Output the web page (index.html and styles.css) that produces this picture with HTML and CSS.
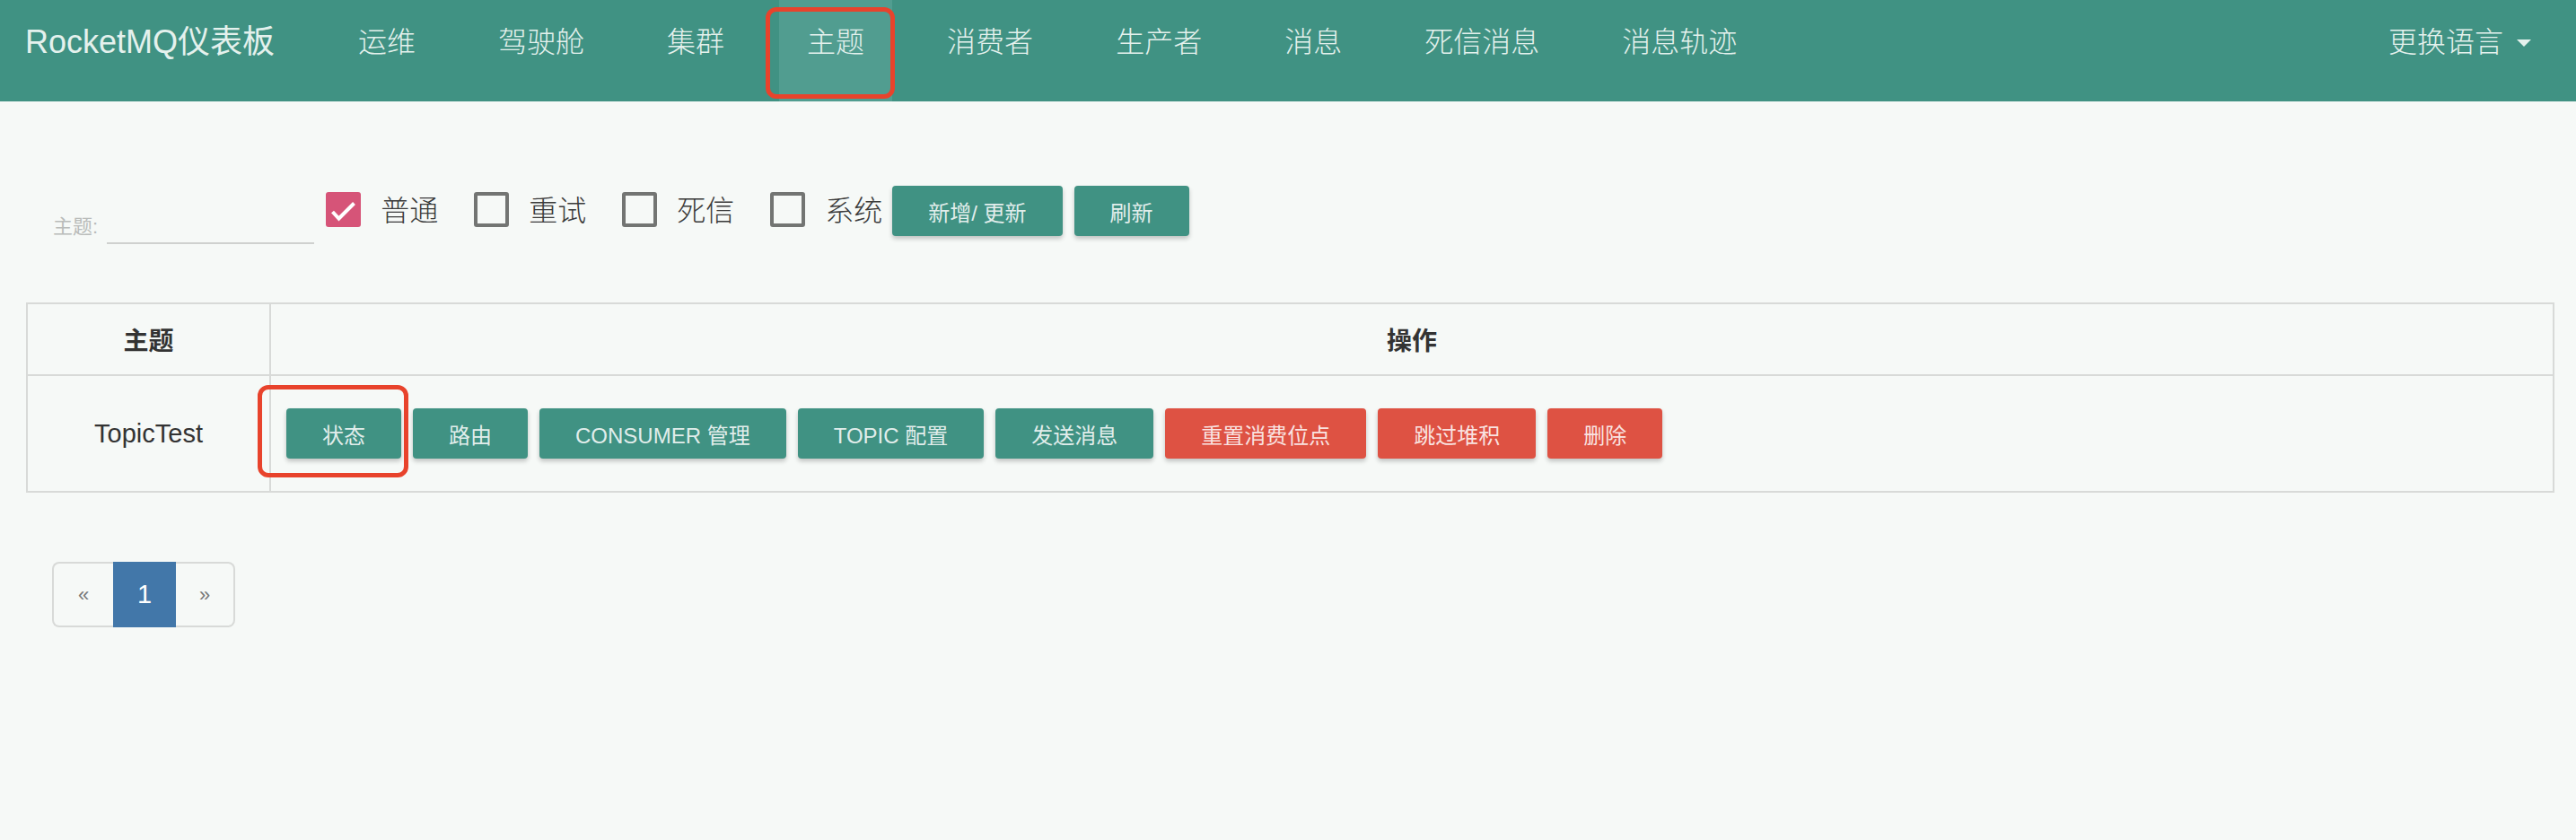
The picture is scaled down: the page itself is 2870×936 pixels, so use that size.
FILE: index.html
```html
<!DOCTYPE html>
<html lang="zh-CN">
<head>
<meta charset="utf-8">
<title>RocketMQ仪表板</title>
<link rel="stylesheet" href="styles.css">
</head>
<body>
<nav class="navbar">
  <div class="brand">RocketMQ仪表板</div>
  <ul class="nav">
    <li><a>运维</a></li>
    <li><a>驾驶舱</a></li>
    <li><a>集群</a></li>
    <li class="active"><a>主题</a><span class="mark nav-mark"></span></li>
    <li><a>消费者</a></li>
    <li><a>生产者</a></li>
    <li><a>消息</a></li>
    <li><a>死信消息</a></li>
    <li><a>消息轨迹</a></li>
  </ul>
  <div class="lang">更换语言<span class="caret"></span></div>
</nav>

<main class="content">
  <div class="filter-row">
    <div class="field">
      <span class="field-label">主题:</span>
      <span class="field-input"></span>
    </div>
    <label class="check">
      <span class="box checked"><svg viewBox="0 0 39 39" width="39" height="39"><polyline points="7.5,22 14.5,29.5 31.5,12.5" fill="none" stroke="#fff" stroke-width="4"/></svg></span>
      <span class="check-text">普通</span>
    </label>
    <label class="check">
      <span class="box"></span>
      <span class="check-text">重试</span>
    </label>
    <label class="check">
      <span class="box"></span>
      <span class="check-text">死信</span>
    </label>
    <label class="check last">
      <span class="box"></span>
      <span class="check-text">系统</span>
    </label>
    <div class="actions">
      <button class="btn btn-teal">新增/ 更新</button>
      <button class="btn btn-teal">刷新</button>
    </div>
  </div>

  <table class="topic-table">
    <thead>
      <tr>
        <th class="col-topic">主题</th>
        <th>操作</th>
      </tr>
    </thead>
    <tbody>
      <tr>
        <td class="topic-name">TopicTest</td>
        <td class="ops-cell">
          <div class="ops">
            <button class="btn btn-teal marked">状态<span class="mark row-mark"></span></button>
            <button class="btn btn-teal">路由</button>
            <button class="btn btn-teal">CONSUMER 管理</button>
            <button class="btn btn-teal">TOPIC 配置</button>
            <button class="btn btn-teal">发送消息</button>
            <button class="btn btn-red">重置消费位点</button>
            <button class="btn btn-red">跳过堆积</button>
            <button class="btn btn-red">删除</button>
          </div>
        </td>
      </tr>
    </tbody>
  </table>

  <ul class="pagination">
    <li class="pg-arrow">«</li>
    <li class="pg-active">1</li>
    <li class="pg-arrow">»</li>
  </ul>
</main>
</body>
</html>
```

FILE: styles.css
```css
* { box-sizing: border-box; }

body {
  margin: 0;
  background: #f6f9f7;
  font-family: "Liberation Sans", "Noto Sans CJK SC", sans-serif;
  color: #333;
}

/* ---------- navbar ---------- */
.navbar {
  display: flex;
  height: 113px;
  background: #409283;
  color: #e4f1ed;
}

.brand {
  font-size: 36px;
  line-height: 40px;
  padding: 27px 0 0 28px;
  white-space: nowrap;
}

.nav {
  display: flex;
  gap: 30px;
  list-style: none;
  margin: 0 0 0 62px;
  padding: 0;
}

.nav li {
  position: relative;
}

.nav a {
  display: block;
  height: 113px;
  padding: 27px 31px 0;
  font-size: 32px;
  line-height: 40px;
  font-weight: 300;
  white-space: nowrap;
}

.nav li.active a {
  background: #519d90;
}

.mark {
  position: absolute;
  border: 5px solid #e8432c;
  border-radius: 12px;
  pointer-events: none;
}

.nav-mark {
  left: -15px;
  top: 8px;
  width: 144px;
  height: 102px;
}

.lang {
  margin-left: auto;
  padding: 27px 50px 0 0;
  font-size: 32px;
  line-height: 40px;
  font-weight: 300;
  white-space: nowrap;
}

.caret {
  display: inline-block;
  margin-left: 15px;
  vertical-align: middle;
  border-top: 8px solid #e4f1ed;
  border-left: 8px solid transparent;
  border-right: 8px solid transparent;
  position: relative;
  top: -2px;
}

/* ---------- content ---------- */
.content {
  padding: 0 24px 0 29px;
}

.filter-row {
  display: flex;
  align-items: flex-start;
  margin-top: 94px;
}

.field {
  display: flex;
  align-items: flex-end;
  height: 65px;
  margin-left: 30px;
}

.field-label {
  font-size: 22px;
  line-height: 26px;
  padding-bottom: 6px;
  color: #b9bcba;
  white-space: nowrap;
}

.field-input {
  display: block;
  width: 231px;
  height: 2px;
  margin-left: 10px;
  background: #cfd1cf;
}

.check {
  display: flex;
  align-items: center;
  margin-top: 7px;
  margin-left: 10px;
  margin-right: 30px;
}

.field + .check {
  margin-left: 13px;
}

.check + .check {
  margin-left: 10px;
}

.check.last {
  margin-right: 11px;
}

.box {
  display: block;
  width: 39px;
  height: 39px;
  border: 4px solid #737573;
  border-radius: 3px;
  flex: none;
}

.box.checked {
  border: none;
  background: #d65478;
}

.box svg {
  display: block;
}

.check-text {
  margin-left: 22px;
  font-size: 32px;
  line-height: 39px;
  font-weight: 300;
  color: #3b3b3b;
  position: relative;
  top: 2px;
  white-space: nowrap;
}

.actions {
  display: flex;
  gap: 13px;
}

/* ---------- buttons ---------- */
.btn {
  position: relative;
  height: 56px;
  padding: 0 40px;
  border: none;
  border-radius: 4px;
  font-family: "Liberation Sans", "Noto Sans CJK SC", sans-serif;
  font-size: 24px;
  color: rgba(255, 255, 255, 0.86);
  box-shadow: 0 3px 5px rgba(0, 0, 0, 0.22);
  white-space: nowrap;
}

.btn-teal { background: #409283; }
.btn-red { background: #de5243; }

.row-mark {
  left: -32px;
  top: -26px;
  width: 168px;
  height: 103px;
}

/* ---------- table ---------- */
.topic-table {
  width: 100%;
  margin-top: 65px;
  border-collapse: collapse;
  table-layout: fixed;
}

.topic-table th,
.topic-table td {
  border: 2px solid #d8dad8;
}

.topic-table th {
  height: 80px;
  font-size: 28px;
  font-weight: 700;
  color: #333;
  text-align: center;
}

.col-topic {
  width: 271px;
}

.topic-table td {
  height: 130px;
}

.topic-name {
  text-align: center;
  font-size: 29px;
  color: #333;
}

.ops-cell {
  padding: 0 0 0 17px;
}

.ops {
  display: flex;
  gap: 13px;
}

/* ---------- pagination ---------- */
.pagination {
  display: flex;
  list-style: none;
  margin: 77px 0 0 29px;
  padding: 0;
}

.pagination li {
  width: 68px;
  height: 73px;
  display: flex;
  align-items: center;
  justify-content: center;
  border-top: 2px solid #d8dad8;
  border-bottom: 2px solid #d8dad8;
}

.pg-arrow {
  font-size: 22px;
  color: #777;
}

.pagination li:first-child {
  border-left: 2px solid #d8dad8;
  border-radius: 8px 0 0 8px;
}

.pagination li:last-child {
  border-right: 2px solid #d8dad8;
  border-radius: 0 8px 8px 0;
  width: 66px;
}

.pg-active {
  width: 70px !important;
  background: #4277a9;
  border-color: #4277a9 !important;
  color: #fff;
  font-size: 29px;
}
```
